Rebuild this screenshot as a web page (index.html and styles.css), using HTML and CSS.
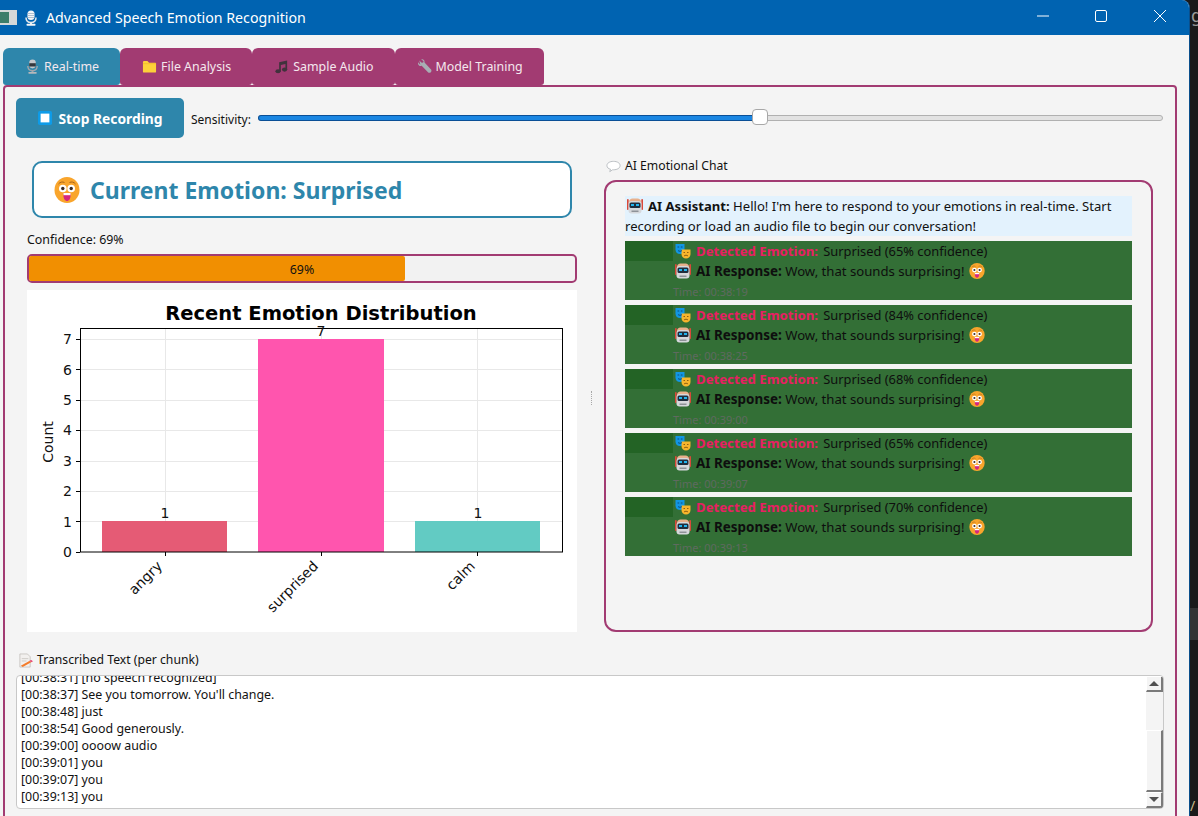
FILE: index.html
```html
<!DOCTYPE html>
<html lang="en">
  <head>
    <meta charset="UTF-8" />
    <title>Advanced Speech Emotion Recognition</title>
    <link rel="stylesheet" href="styles.css">
  </head>
  <body>
    <svg class="icon-defs" width="0" height="0">
      <symbol id="i-mic" viewBox="2 0 12 16">
        <rect x="4.500" y="0.500" width="7" height="9.500" rx="3.500" fill="#c4c8cc"/>
        <rect x="4.500" y="4.500" width="7" height="3.500" fill="#33383e"/>
        <path d="M3 7.500c0 3.300 2.200 5 5 5s5-1.700 5-5" fill="none" stroke="#a0a6ac" stroke-width="1.500"/>
        <rect x="7" y="12" width="2" height="2.500" fill="#a0a6ac"/>
        <rect x="3.500" y="13.800" width="9" height="2" rx=".8" fill="#b4b8bc"/>
      </symbol>
      <symbol id="i-mic-white" viewBox="2 0 12 16">
        <rect x="4.500" y="0.500" width="7" height="9.500" rx="3.500" fill="#f4f6f8"/>
        <path d="M4.500 3.500h7M4.500 5.500h7M4.500 7.500h7" stroke="#9fb4c6" stroke-width=".8"/>
        <path d="M3 7.500c0 3.300 2.200 5 5 5s5-1.700 5-5" fill="none" stroke="#e4e8ec" stroke-width="1.500"/>
        <rect x="7" y="12" width="2" height="2.500" fill="#e4e8ec"/>
        <rect x="3.500" y="13.800" width="9" height="2" rx=".8" fill="#f4f6f8"/>
      </symbol>
      <symbol id="i-folder" viewBox="0 0 16 16">
        <path d="M1 3.500C1 2.700 1.500 2 2.300 2h3.500l1.700 2H14c.6 0 1 .5 1 1v8.500c0 .6-.4 1-1 1H2c-.6 0-1-.4-1-1z" fill="#fdd13a"/>
        <path d="M1 5h14" stroke="#f3b62b" stroke-width=".8"/>
      </symbol>
      <symbol id="i-music" viewBox="0 0 16 16">
        <path d="M5.500 3.500 14 1.500v10h-1.800V5.200L7.300 6.300v7H5.500z" fill="#40323c"/>
        <ellipse cx="4.300" cy="13" rx="2.800" ry="2.200" fill="#40323c"/>
        <ellipse cx="11.300" cy="11.300" rx="2.800" ry="2.200" fill="#40323c"/>
      </symbol>
      <symbol id="i-wrench" viewBox="0 0 16 16">
        <path d="M2.500 1.500 5 4l1.600-.4.400-1.500L4.500.6C6.500-.2 8.500 1.500 8 3.800l7 7.500c.8 1 .3 2.400-.5 3-.8.600-2 .7-2.800-.2L5 7.300C2.800 8 .5 6 1.200 3.500L3.500 6" fill="#a8aeb4"/>
      </symbol>
      <symbol id="i-stop" viewBox="0 0 16 16">
        <rect width="16" height="16" rx="2" fill="#0d9be8"/>
        <rect x="3" y="3" width="10" height="10" fill="#fff"/>
      </symbol>
      <symbol id="i-face" viewBox="0 0 26 26">
        <ellipse cx="13" cy="13" rx="12.500" ry="13" fill="#f9a52c"/>
        <path d="M4.500 7c1.500-2 4-2.500 6-1.500M15.500 5.500c2-1 4.500-.5 6 1.500" fill="none" stroke="#a8651a" stroke-width="1"/>
        <circle cx="8.800" cy="11.500" r="3.800" fill="#fff"/>
        <circle cx="17.200" cy="11.500" r="3.800" fill="#fff"/>
        <circle cx="8.800" cy="11.500" r="1.700" fill="#3b2c26"/>
        <circle cx="17.200" cy="11.500" r="1.700" fill="#3b2c26"/>
        <path d="M9.500 16.500h7v2.500c0 2.500-1.500 5-3.500 5s-3.500-2.500-3.500-5z" fill="#d5267f"/>
        <rect x="9.500" y="16" width="7" height="2.200" fill="#fff"/>
      </symbol>
      <symbol id="i-robot" viewBox="0 0 16 16">
        <rect x="0" y="1" width="1.700" height="11" rx=".8" fill="#d9493a"/>
        <rect x="14.300" y="1" width="1.700" height="11" rx=".8" fill="#d9493a"/>
        <path d="M2 4c0-2 1.500-3.500 3.500-3.500h5C12.500.5 14 2 14 4z" fill="#e8b08c"/>
        <rect x="1.500" y="3" width="13" height="12.500" rx="3" fill="#d6d8dc"/>
        <rect x="2.500" y="4.500" width="11" height="5.500" rx="1.500" fill="#1f2d3d"/>
        <rect x="4" y="6" width="3" height="2" fill="#22b4ee"/>
        <rect x="9" y="6" width="3" height="2" fill="#22b4ee"/>
        <rect x="4.500" y="12.500" width="7" height="1.500" fill="#8e9298"/>
      </symbol>
      <symbol id="i-masks" viewBox="0 0 16 16">
        <path d="M.5 1h9v5.500c0 3-2 4.500-4.500 4.500S.5 9.500.5 6.500z" fill="#1296e4"/>
        <path d="M6.500 6.500h9v4.500c0 2.800-2 4.500-4.500 4.500s-4.500-1.700-4.500-4.500z" fill="#f7b52c"/>
        <path d="M2.500 4h1.700M5.800 4h1.700M3 7.500c1 1 3 1 4 0" stroke="#0c4f80" stroke-width="1" fill="none"/>
        <path d="M8.500 9.500h1.500M12 9.500h1.500M9 13c1-1 3-1 4 0" stroke="#8f5f10" stroke-width="1" fill="none"/>
      </symbol>
      <symbol id="i-balloon" viewBox="0 0 16 16">
        <path d="M8 2.500c4 0 7 1.800 7 4.500s-3 4.500-7 4.500l-1 0-3 2 .8-2.600C2.500 10.500 1 9 1 7c0-2.700 3-4.500 7-4.500z" fill="#fff" stroke="#b8bcc0" stroke-width="1"/>
      </symbol>
      <symbol id="i-memo" viewBox="0 0 16 16">
        <path d="M2 1h8l3 3v11H2z" fill="#f2f0ee" stroke="#b8b4b0" stroke-width=".7"/>
        <path d="M4 6h7M4 8.500h5" stroke="#c4c0bc" stroke-width=".8"/>
        <path d="M3 13.500 12 8.500l2.500 1.200L5 15z" fill="#f47b2a"/>
        <path d="M12 8.500l2.500 1.200L16 8.800l-2-1.300z" fill="#e8386a"/>
      </symbol>
    </svg>

    <div class="desktop">
      <div class="window">
        <div class="titlebar">
          <div class="app-icon"><span class="app-icon-screen"></span></div>
          <svg class="title-mic"><use href="#i-mic-white"/></svg>
          <span class="title-text">Advanced Speech Emotion Recognition</span>
          <div class="window-buttons">
            <svg class="win-btn" viewBox="0 0 16 16"><path d="M2 8h12" stroke="#fff" stroke-width="1" fill="none"/></svg>
            <svg class="win-btn win-btn-max" viewBox="0 0 16 16"><rect x="2.500" y="2.500" width="11" height="11" rx="1.500" stroke="#fff" stroke-width="1" fill="none"/></svg>
            <svg class="win-btn" viewBox="0 0 16 16"><path d="M2 2l12 12M14 2L2 14" stroke="#fff" stroke-width="1" fill="none"/></svg>
          </div>
        </div>

        <div class="client">
          <div class="tab-bar">
            <div class="tab active"><svg class="tab-icon"><use href="#i-mic"/></svg>Real-time</div>
            <div class="tab"><svg class="tab-icon"><use href="#i-folder"/></svg>File Analysis</div>
            <div class="tab"><svg class="tab-icon"><use href="#i-music"/></svg>Sample Audio</div>
            <div class="tab"><svg class="tab-icon"><use href="#i-wrench"/></svg>Model Training</div>
          </div>

          <div class="pane">
            <div class="toolbar">
              <button class="stop-button"><svg class="stop-icon"><use href="#i-stop"/></svg>Stop Recording</button>
              <span class="sensitivity-label">Sensitivity:</span>
              <div class="slider">
                <div class="slider-fill"></div>
                <div class="slider-thumb"></div>
              </div>
            </div>

            <div class="main-row">
              <div class="left-col">
                <div class="emotion-box">
                  <svg class="emotion-face"><use href="#i-face"/></svg>
                  <span>Current Emotion: Surprised</span>
                </div>
                <div class="confidence-label">Confidence: 69%</div>
                <div class="progress">
                  <div class="progress-fill"></div>
                  <span class="progress-text">69%</span>
                </div>
                <svg class="chart" viewBox="0 0 550 342">
                  <rect width="550" height="342" fill="#fff"/>
                  <text class="chart-title" x="294" y="30" text-anchor="middle">Recent Emotion Distribution</text>
                  <g stroke="#e8e8e8" stroke-width="1">
                    <path d="M53.500 231.500h482M53.500 201.500h482M53.500 171.500h482M53.500 140.500h482M53.500 110.500h482M53.500 79.500h482M53.500 49.500h482"/>
                    <path d="M138.500 38v224M294.500 38v224M450.500 38v224"/>
                  </g>
                  <rect x="75" y="231" width="125" height="31" fill="#e55b75"/>
                  <rect x="231" y="49" width="126" height="213" fill="#ff55ae"/>
                  <rect x="388" y="231" width="125" height="31" fill="#62cbc3"/>
                  <rect x="53.500" y="38.500" width="482" height="223.500" fill="none" stroke="#000" stroke-width="1"/>
                  <path d="M49 262.500h4M49 231.500h4M49 201.500h4M49 171.500h4M49 140.500h4M49 110.500h4M49 79.500h4M49 49.500h4M138.500 262v4M294.500 262v4M450.500 262v4" stroke="#000" stroke-width="1"/>
                  <g class="chart-tick" text-anchor="end">
                    <text x="45" y="267">0</text>
                    <text x="45" y="237">1</text>
                    <text x="45" y="206">2</text>
                    <text x="45" y="176">3</text>
                    <text x="45" y="145">4</text>
                    <text x="45" y="115">5</text>
                    <text x="45" y="85">6</text>
                    <text x="45" y="54">7</text>
                  </g>
                  <g class="chart-tick" text-anchor="middle">
                    <text x="138" y="228">1</text>
                    <text x="294" y="46">7</text>
                    <text x="451" y="228">1</text>
                  </g>
                  <text class="chart-tick" transform="translate(26 152) rotate(-90)" text-anchor="middle">Count</text>
                  <g class="chart-tick" text-anchor="end">
                    <text transform="translate(136 277) rotate(-45)">angry</text>
                    <text transform="translate(292 277) rotate(-45)">surprised</text>
                    <text transform="translate(449 277) rotate(-45)">calm</text>
                  </g>
                </svg>
              </div>

              <div class="splitter"></div>

              <div class="right-col">
                <div class="group-label"><svg class="label-icon"><use href="#i-balloon"/></svg>AI Emotional Chat</div>
                <div class="chat-box">
                  <div class="welcome">
                    <svg class="chat-icon welcome-icon"><use href="#i-robot"/></svg><b>AI Assistant:</b> Hello! I'm here to respond to your emotions in real-time. Start recording or load an audio file to begin our conversation!
                  </div>
                  <div class="msg">
                    <div class="msg-head"><span class="msg-notch"></span><svg class="chat-icon"><use href="#i-masks"/></svg><b class="detected">Detected Emotion:</b> Surprised (65% confidence)</div>
                    <div class="msg-line"><svg class="chat-icon"><use href="#i-robot"/></svg><b>AI Response:</b> Wow, that sounds surprising! <svg class="chat-icon face-end"><use href="#i-face"/></svg></div>
                    <div class="msg-time">Time: 00:38:19</div>
                  </div>
                  <div class="msg">
                    <div class="msg-head"><span class="msg-notch"></span><svg class="chat-icon"><use href="#i-masks"/></svg><b class="detected">Detected Emotion:</b> Surprised (84% confidence)</div>
                    <div class="msg-line"><svg class="chat-icon"><use href="#i-robot"/></svg><b>AI Response:</b> Wow, that sounds surprising! <svg class="chat-icon face-end"><use href="#i-face"/></svg></div>
                    <div class="msg-time">Time: 00:38:25</div>
                  </div>
                  <div class="msg">
                    <div class="msg-head"><span class="msg-notch"></span><svg class="chat-icon"><use href="#i-masks"/></svg><b class="detected">Detected Emotion:</b> Surprised (68% confidence)</div>
                    <div class="msg-line"><svg class="chat-icon"><use href="#i-robot"/></svg><b>AI Response:</b> Wow, that sounds surprising! <svg class="chat-icon face-end"><use href="#i-face"/></svg></div>
                    <div class="msg-time">Time: 00:39:00</div>
                  </div>
                  <div class="msg">
                    <div class="msg-head"><span class="msg-notch"></span><svg class="chat-icon"><use href="#i-masks"/></svg><b class="detected">Detected Emotion:</b> Surprised (65% confidence)</div>
                    <div class="msg-line"><svg class="chat-icon"><use href="#i-robot"/></svg><b>AI Response:</b> Wow, that sounds surprising! <svg class="chat-icon face-end"><use href="#i-face"/></svg></div>
                    <div class="msg-time">Time: 00:39:07</div>
                  </div>
                  <div class="msg">
                    <div class="msg-head"><span class="msg-notch"></span><svg class="chat-icon"><use href="#i-masks"/></svg><b class="detected">Detected Emotion:</b> Surprised (70% confidence)</div>
                    <div class="msg-line"><svg class="chat-icon"><use href="#i-robot"/></svg><b>AI Response:</b> Wow, that sounds surprising! <svg class="chat-icon face-end"><use href="#i-face"/></svg></div>
                    <div class="msg-time">Time: 00:39:13</div>
                  </div>
                </div>
              </div>
            </div>

            <div class="group-label transcript-label"><svg class="label-icon"><use href="#i-memo"/></svg>Transcribed Text (per chunk)</div>
            <div class="transcript">
              <div class="transcript-text">
                <div>[00:38:31] [no speech recognized]</div>
                <div>[00:38:37] See you tomorrow. You'll change.</div>
                <div>[00:38:48] just</div>
                <div>[00:38:54] Good generously.</div>
                <div>[00:39:00] oooow audio</div>
                <div>[00:39:01] you</div>
                <div>[00:39:07] you</div>
                <div>[00:39:13] you</div>
              </div>
              <div class="scrollbar">
                <div class="scroll-btn"><span class="arrow-up"></span></div>
                <div class="scroll-track"></div>
                <div class="scroll-thumb"></div>
                <div class="scroll-btn"><span class="arrow-down"></span></div>
              </div>
            </div>
          </div>
        </div>
      </div>

      <div class="backdrop">
        <span class="backdrop-g">g</span>
        <span class="backdrop-band"></span>
        <span class="backdrop-slash">/</span>
      </div>
    </div>
  </body>
</html>
```

FILE: styles.css
```css
html, body {
  margin: 0;
  height: 816px;
  overflow: hidden;
}

body {
  font-family: "Noto Sans", "Open Sans", sans-serif;
  font-size: 12.400px;
  color: #111;
}

.icon-defs {
  display: block;
  height: 0;
}

.desktop {
  display: flex;
  width: 1198px;
  height: 816px;
  background: #1a1a1a;
}

.window {
  width: 1190px;
  height: 816px;
  flex: none;
  overflow: hidden;
  border-top-right-radius: 8px;
  background: #f4f4f4;
  border-right: 1px solid #0a4f8c;
  box-sizing: border-box;
}

/* Title bar */
.titlebar {
  display: flex;
  align-items: center;
  height: 35px;
  background: #0063b1;
  color: #fff;
}

.app-icon {
  width: 17px;
  height: 15px;
  margin-right: 8px;
  box-sizing: border-box;
  background: #d4d8d8;
  padding: 2px 8px 2px 0;
}

.app-icon-screen {
  display: block;
  height: 100%;
  background: #3c7d6a;
}

.title-mic {
  width: 12px;
  height: 16px;
  margin-right: 9px;
}

.title-text {
  font-size: 14.200px;
}

.window-buttons {
  display: flex;
  margin-left: auto;
  gap: 42px;
  margin-right: 21px;
}

.win-btn {
  width: 16px;
  height: 16px;
  margin-top: -4px;
}

.win-btn-max {
  margin-right: 1px;
}

/* Tabs */
.client {
  padding: 13px 13px 0 3px;
}

.tab-bar {
  display: flex;
  height: 37px;
}

.tab {
  display: flex;
  align-items: center;
  padding: 0 21px 0 22px;
  background: #a23b72;
  color: #f4e8ee;
  border-radius: 6px 6px 3px 3px;
}

.tab.active {
  background: #2e86ab;
}

.tab-icon {
  width: 15px;
  height: 15px;
  margin-right: 4px;
}

/* Main pane */
.pane {
  height: 760px;
  width: 1174px;
  box-sizing: border-box;
  border: 2px solid #a23b72;
  border-radius: 4px;
  padding: 11px 11px 0;
}

.toolbar {
  display: flex;
  align-items: center;
  height: 40px;
}

.stop-button {
  display: flex;
  align-items: center;
  justify-content: center;
  width: 168px;
  height: 40px;
  padding: 0;
  border: none;
  border-radius: 5px;
  background: #2e86ab;
  color: #fff;
  font-family: inherit;
  font-size: 13.800px;
  font-weight: bold;
}

.stop-icon {
  width: 14px;
  height: 14px;
  margin-right: 7px;
}

.sensitivity-label {
  margin: 2px 7px 0 7px;
  font-size: 12px;
}

.slider {
  position: relative;
  width: 905px;
  height: 6px;
  box-sizing: border-box;
  background: #e2e2e2;
  border: 1px solid #b0b0b0;
  border-radius: 3px;
}

.slider-fill {
  width: 497px;
  height: 100%;
  background: #1a86e2;
  box-shadow: 0 0 0 1px #0a4f96;
  border-radius: 2px;
}

.slider-thumb {
  position: absolute;
  left: 493px;
  top: -7px;
  width: 16px;
  height: 16px;
  box-sizing: border-box;
  background: #fff;
  border: 1px solid #a8a8a8;
  border-radius: 4px;
}

.main-row {
  display: flex;
  margin-top: 17px;
}

.left-col {
  width: 550px;
  margin-left: 11px;
  padding-top: 6px;
}

.emotion-box {
  display: flex;
  align-items: center;
  height: 57px;
  margin: 0 5px;
  padding-left: 20px;
  box-sizing: border-box;
  background: #fff;
  border: 2px solid #2e86ab;
  border-radius: 10px;
  color: #2e86ab;
  font-size: 23px;
  font-weight: bold;
}

.emotion-face {
  width: 26px;
  height: 26px;
  margin-right: 10px;
}

.confidence-label {
  margin: 14px 0 6px;
  line-height: 16px;
}

.progress {
  position: relative;
  height: 29px;
  box-sizing: border-box;
  background: #f2f2f2;
  border: 2px solid #a23b72;
  border-radius: 5px;
}

.progress-fill {
  width: 376px;
  height: 100%;
  background: #f18f01;
  border-radius: 2px;
}

.progress-text {
  position: absolute;
  left: 0;
  right: 0;
  top: 0;
  text-align: center;
  line-height: 27px;
}

.chart {
  display: block;
  width: 550px;
  height: 342px;
  margin-top: 7px;
}

.chart text {
  font-family: "DejaVu Sans", sans-serif;
}

.chart-title {
  font-size: 19.500px;
  font-weight: bold;
}

.chart-tick {
  font-size: 14px;
  fill: #111;
}

.splitter {
  width: 1px;
  height: 14px;
  margin: 236px 11px 0 14px;
  border-left: 1px dotted #a8a8a8;
}

.right-col {
  width: 549px;
  padding-top: 3px;
}

.group-label {
  display: flex;
  align-items: center;
  line-height: 16px;
  padding-left: 2px;
  font-size: 12.200px;
}

.label-icon {
  width: 15px;
  height: 15px;
  margin-right: 4px;
}

.chat-box {
  height: 452px;
  box-sizing: border-box;
  margin-top: 6px;
  padding: 14px 19px 0;
  background: #f4f4f4;
  border: 2px solid #a23b72;
  border-radius: 12px;
  font-size: 13.100px;
  line-height: 20px;
}

.welcome {
  background: #e3f2fd;
  margin-bottom: 5px;
}

.chat-icon {
  width: 16px;
  height: 16px;
  vertical-align: -3px;
  margin: 0 5px 0 2px;
  flex: none;
}

.face-end {
  margin-left: 1px;
}

.msg {
  height: 59px;
  margin-bottom: 5px;
  background: #336f36;
  color: #0e0e0e;
}

.msg-head {
  display: flex;
  align-items: center;
  white-space: pre;
  font-size: 12.850px;
}

.msg-notch {
  width: 48px;
  height: 20px;
  background: #236325;
}

.msg-line {
  padding-left: 48px;
  font-size: 13.150px;
}

.msg-line b {
  font-size: 13.450px;
}

.msg-time {
  padding-left: 48px;
  font-size: 11px;
  color: #5f6a60;
  margin-top: 1px;
}

.detected {
  color: #e91e63;
  font-size: 13.200px;
  margin-right: 2px;
}

.transcript-label {
  margin-top: 20px;
}

/* Transcript box with old-style scrollbar */
.transcript {
  display: flex;
  justify-content: space-between;
  height: 134px;
  margin-top: 7px;
  box-sizing: border-box;
  background: #fff;
  border: 1px solid #c8c8c8;
  border-radius: 4px;
  overflow: hidden;
}

.transcript-text {
  margin-top: -7px;
  padding-left: 4px;
  line-height: 17px;
}

.scrollbar {
  display: flex;
  flex-direction: column;
  width: 17px;
  background: #f4f4f4;
}

.scroll-btn {
  display: flex;
  align-items: center;
  justify-content: center;
  height: 16px;
  flex: none;
  box-sizing: border-box;
  background: #f4f4f4;
  border-right: 2px solid #7a7a7a;
  border-bottom: 2px solid #7a7a7a;
  border-left: 1px solid #fff;
  border-top: 1px solid #fff;
}

.scroll-track {
  height: 38px;
  flex: none;
}

.scroll-thumb {
  flex: 1;
  box-sizing: border-box;
  background: #f4f4f4;
  border-right: 2px solid #7a7a7a;
  border-bottom: 2px solid #7a7a7a;
  border-left: 1px solid #fff;
  border-top: 1px solid #fff;
}

.arrow-up {
  width: 0;
  height: 0;
  border: 5px solid transparent;
  border-top: none;
  border-bottom: 5px solid #505050;
}

.arrow-down {
  width: 0;
  height: 0;
  border: 5px solid transparent;
  border-bottom: none;
  border-top: 5px solid #505050;
}

/* Strip of the desktop behind the window */
.backdrop {
  display: flex;
  flex-direction: column;
  width: 8px;
  overflow: hidden;
  color: #9a9a9a;
  font-size: 18px;
}

.backdrop-g {
  height: 30px;
  line-height: 30px;
  padding-left: 1px;
}

.backdrop-band {
  height: 32px;
  margin-top: 578px;
  background: #333;
}

.backdrop-slash {
  margin-top: auto;
  line-height: 20px;
  color: #c9b98a;
  font-size: 14px;
}
```
